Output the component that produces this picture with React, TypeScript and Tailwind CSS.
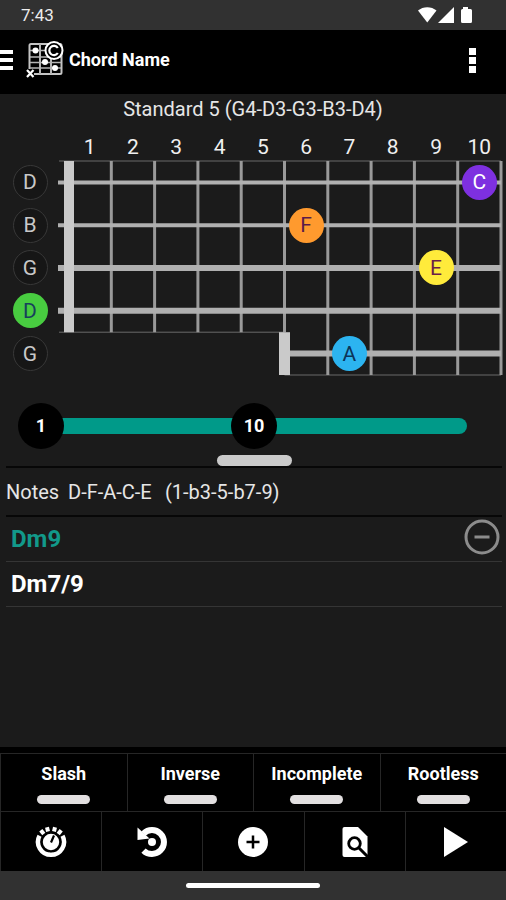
import { useState } from "react";

const strings = [
  { name: "D", thickness: 4 },
  { name: "B", thickness: 4 },
  { name: "G", thickness: 6 },
  { name: "D", thickness: 6, root: true },
  { name: "G", thickness: 6 },
];

const frets = [1, 2, 3, 4, 5, 6, 7, 8, 9, 10];

const notes = [
  { name: "C", place: "col-start-10 row-start-1", color: "bg-[#7e30e0] text-white" },
  { name: "F", place: "col-start-6 row-start-2", color: "bg-[#ff9a2e] text-[#5a1a4a]" },
  { name: "E", place: "col-start-9 row-start-3", color: "bg-[#ffeb3b] text-[#6b2048]" },
  { name: "A", place: "col-start-7 row-start-5", color: "bg-[#2cb4f0] text-[#0c3558]" },
];

const FIRST = 1;
const LAST = 19;

function StatusBar() {
  return (
    <div className="flex h-[30px] items-center justify-between bg-[#313131] pr-[34px] pl-[21px]">
      <span className="text-[17px] leading-5 text-[#ececec]">7:43</span>
      <svg width="54" height="18" viewBox="0 0 54 18" fill="#fff" aria-hidden="true">
        <path d="M0 4.5C5 0 13.500 0 18.500 4.500L9.250 16.500Z" />
        <path d="M36 1V17H20Z" />
        <path d="M45 1h5v2h2.500q1.500 0 1.500 1.500v11q0 1.500-1.500 1.500h-8q-1.500 0-1.500-1.500v-11q0-1.500 1.500-1.500H45z" />
      </svg>
    </div>
  );
}

function Header() {
  return (
    <header className="flex h-16 items-center bg-black pb-1">
      <button aria-label="Open menu" className="flex w-[13px] flex-col gap-1">
        <span className="h-1 bg-white" />
        <span className="h-1 bg-white" />
        <span className="h-1 bg-white" />
      </button>
      <svg className="ml-3" width="39" height="38" viewBox="0 0 39 38" fill="none" aria-hidden="true">
        <rect x="4.500" y="3" width="32" height="30" rx="1.500" stroke="#c4c4c4" strokeWidth="2" />
        <path d="M15 3V33M26 3V33" stroke="#b4b4b4" strokeWidth="2" />
        <path d="M5 9.500H36M5 16H36M5 21.500H36M5 27H36" stroke="#b4b4b4" strokeWidth="1.500" />
        <circle cx="10.500" cy="9.500" r="3" fill="#fff" />
        <circle cx="20" cy="21" r="3" fill="#fff" />
        <circle cx="30" cy="27" r="3" fill="#fff" />
        <circle cx="29" cy="9.500" r="8.500" fill="#000" stroke="#fff" strokeWidth="2" />
        <path d="M32.800 7A4.600 4.600 0 1 0 32.800 12" stroke="#fff" strokeWidth="2.200" />
        <path d="M1 28H9V37H1Z" fill="#000" />
        <path d="M2 29L8.500 36M8.500 29L2 36" stroke="#fff" strokeWidth="2.200" />
      </svg>
      <h1 className="ml-[5px] flex-1 text-[18px] leading-6 font-bold text-white">Chord Name</h1>
      <button aria-label="More options" className="mr-[30px] flex flex-col gap-0.5">
        <span className="size-[7px] bg-white" />
        <span className="size-[7px] bg-white" />
        <span className="size-[7px] bg-white" />
      </button>
    </header>
  );
}

function Fretboard() {
  return (
    <section aria-label="Fretboard" className="pr-[5px]">
      <div className="ml-[68px] grid grid-cols-10 text-center text-[21px] leading-7 text-[#f0f0f0]">
        {frets.map((n) => (
          <span key={n}>{n}</span>
        ))}
      </div>
      <div className="flex h-[214px]">
        <div className="grid w-[60px] grid-rows-5 place-items-center">
          {strings.map((s, i) => (
            <button
              key={i}
              className={
                s.root
                  ? "size-[35px] rounded-full bg-[#48cc40] text-[21px] leading-8 text-[#17405c]"
                  : "size-[35px] rounded-full border border-[#383838] bg-[#161616] text-[21px] leading-8 text-[#c8c8c8]"
              }
            >
              {s.name}
            </button>
          ))}
        </div>
        <div className="relative ml-2 grid flex-1 grid-cols-10 grid-rows-5 place-items-center">
          <svg className="absolute inset-0 size-full overflow-visible" aria-hidden="true">
            <line x1="-9" x2="100%" y1="0" y2="0" stroke="#6a6a6a" />
            <line x1="-9" x2="50%" y1="80%" y2="80%" stroke="#6a6a6a" />
            <line x1="50%" x2="100%" y1="100%" y2="100%" stroke="#6a6a6a" />
            {frets.map((n) => (
              <line
                key={n}
                x1={`${n * 10}%`}
                x2={`${n * 10}%`}
                y1="0"
                y2={n > 5 ? "100%" : "80%"}
                stroke="#9a9a9a"
                strokeWidth="3"
              />
            ))}
            {strings.map((s, i) => (
              <line
                key={i}
                x1={i === 4 ? "50%" : "-10"}
                x2="100%"
                y1={`${i * 20 + 10}%`}
                y2={`${i * 20 + 10}%`}
                stroke="#b0b0b0"
                strokeWidth={s.thickness}
              />
            ))}
            <line x1="1" x2="1" y1="0" y2="80%" stroke="#cacaca" strokeWidth="10" />
            <line x1="50%" x2="50%" y1="80%" y2="100%" stroke="#cacaca" strokeWidth="11" />
          </svg>
          {notes.map((n) => (
            <button
              key={n.name}
              className={`relative size-[35px] rounded-full text-[21px] leading-8 ${n.place} ${n.color}`}
            >
              {n.name}
            </button>
          ))}
        </div>
      </div>
    </section>
  );
}

const rangeClass =
  "pointer-events-none h-[46px] w-full appearance-none bg-transparent [grid-area:1/1] [&::-webkit-slider-thumb]:pointer-events-auto [&::-webkit-slider-thumb]:size-[46px] [&::-webkit-slider-thumb]:appearance-none [&::-webkit-slider-thumb]:rounded-full [&::-webkit-slider-thumb]:bg-black";

function ThumbLabel({ value }: { value: number }) {
  const share = (value - FIRST) / (LAST - FIRST);
  return (
    <span
      className="pointer-events-none z-10 w-[46px] text-center text-[18px] leading-6 font-bold text-white [grid-area:1/1]"
      style={{ marginLeft: `calc((100% - 46px) * ${share})` }}
    >
      {value}
    </span>
  );
}

function FretRange() {
  const [from, setFrom] = useState(1);
  const [to, setTo] = useState(10);
  return (
    <div className="mt-7 mr-4 ml-[18px] grid items-center">
      <div className="mx-[23px] h-4 rounded-full bg-[#009a89] [grid-area:1/1]" />
      <input
        type="range"
        aria-label="First fret"
        min={FIRST}
        max={LAST}
        value={from}
        onChange={(e) => setFrom(Math.min(Number(e.target.value), to))}
        className={rangeClass}
      />
      <input
        type="range"
        aria-label="Last fret"
        min={FIRST}
        max={LAST}
        value={to}
        onChange={(e) => setTo(Math.max(Number(e.target.value), from))}
        className={rangeClass}
      />
      <ThumbLabel value={from} />
      <ThumbLabel value={to} />
    </div>
  );
}

function Results() {
  return (
    <section className="mr-1 ml-[6px]">
      <div className="flex h-[49px] items-center border-b-2 border-[#070707] text-[20px] leading-6 whitespace-pre text-[#e6e6e6]">
        <span className="w-[62px]">Notes</span>
        <span className="w-[97px]">D-F-A-C-E</span>
        <span>(1-b3-5-b7-9)</span>
      </div>
      <ul className="text-[24px] leading-8 font-bold">
        <li className="flex h-[45px] items-center justify-between border-b border-[#353535] pl-[5px] text-[#12998a]">
          <button>Dm9</button>
          <button aria-label="Remove Dm9" className="mb-1 pr-0.5">
            <svg width="36" height="36" viewBox="0 0 36 36" fill="none" stroke="#8c8c8c" strokeWidth="3">
              <circle cx="18" cy="18" r="16" />
              <path d="M10.500 18H25.500" />
            </svg>
          </button>
        </li>
        <li className="flex h-[45px] items-center border-b border-[#353535] pl-[5px] text-white">
          <button>Dm7/9</button>
        </li>
      </ul>
    </section>
  );
}

function RotorIcon() {
  return (
    <svg width="32" height="32" viewBox="0 0 32 32" fill="none" aria-hidden="true">
      <path d="M4.500 9.800A13 13 0 1 0 27.500 9.800" stroke="#fff" strokeWidth="4.500" />
      <path
        d="M13 5.500L12 1.200M19 5.500L20 1.200M8.800 8L5.800 4.200M23.200 8L26.200 4.200"
        stroke="#fff"
        strokeWidth="4"
      />
      <circle cx="16" cy="16" r="9.200" fill="#fff" stroke="#000" strokeWidth="2" />
      <path d="M16 16.500L19 9.500" stroke="#000" strokeWidth="2.200" />
    </svg>
  );
}

function UndoIcon() {
  return (
    <svg width="32" height="32" viewBox="0 0 32 32" fill="none" aria-hidden="true">
      <path d="M7.500 7.500A12 12 0 1 1 7.500 24.500" stroke="#fff" strokeWidth="6" />
      <path d="M1.500 1.500V14L13.500 12.500Z" fill="#fff" />
      <circle cx="16" cy="16" r="4" fill="#fff" />
    </svg>
  );
}

function AddIcon() {
  return (
    <svg width="32" height="32" viewBox="0 0 32 32" fill="none" aria-hidden="true">
      <circle cx="16" cy="16" r="15" fill="#fff" />
      <path d="M16 9.500V22.500M9.500 16H22.500" stroke="#000" strokeWidth="2.500" />
    </svg>
  );
}

function FindIcon() {
  return (
    <svg width="32" height="32" viewBox="0 0 32 32" fill="none" aria-hidden="true">
      <path d="M5.500 1H19L28.500 10.500V29Q28.500 31 26.500 31H5.500Q3.500 31 3.500 29V3Q3.500 1 5.500 1Z" fill="#fff" />
      <circle cx="15.500" cy="17.500" r="5.800" stroke="#000" strokeWidth="2.800" />
      <path d="M19.500 21.500L28.500 30.500" stroke="#000" strokeWidth="3" />
    </svg>
  );
}

function PlayIcon() {
  return (
    <svg width="32" height="32" viewBox="0 0 32 32" fill="#fff" aria-hidden="true">
      <path d="M4 1L28 16L4 31Z" />
    </svg>
  );
}

const filters = ["Slash", "Inverse", "Incomplete", "Rootless"];

const actions = [
  { label: "Capo dial", Icon: RotorIcon },
  { label: "Reset", Icon: UndoIcon },
  { label: "Add", Icon: AddIcon },
  { label: "Find", Icon: FindIcon },
  { label: "Play", Icon: PlayIcon },
];

function Toolbar() {
  return (
    <footer className="mt-auto bg-black pt-[6px]">
      <div className="grid h-[58px] grid-cols-4 border-t border-[#262626]">
        {filters.map((f) => (
          <button
            key={f}
            className="flex flex-col items-center border-l border-[#262626] pt-2 text-[18px] leading-6 font-bold text-white"
          >
            {f}
            <span className="mt-[9px] h-[9px] w-[53px] rounded-full bg-[#e2dfe0]" />
          </button>
        ))}
      </div>
      <div className="grid h-[60px] grid-cols-5 border-t border-[#262626]">
        {actions.map(({ label, Icon }) => (
          <button
            key={label}
            aria-label={label}
            className="flex items-center justify-center border-l border-[#262626]"
          >
            <Icon />
          </button>
        ))}
      </div>
      <div className="flex h-[29px] items-center justify-center bg-[#313131]">
        <span className="h-[5px] w-[134px] rounded-full bg-white" />
      </div>
    </footer>
  );
}

export default function App() {
  return (
    <div className="flex min-h-screen flex-col bg-[#1b1b1b] font-[Roboto,sans-serif]">
      <StatusBar />
      <Header />
      <main>
        <h2 className="h-[39px] pt-[3px] text-center text-[20px] leading-6 text-[#e6e6e6]">
          Standard 5 (G4-D3-G3-B3-D4)
        </h2>
        <Fretboard />
        <FretRange />
        <div className="mr-1 ml-[6px] mt-[6px] flex justify-center border-b-2 border-[#070707]">
          <button aria-label="Resize panel" className="h-[11px] w-[75px] rounded-full bg-[#cacaca]" />
        </div>
        <Results />
      </main>
      <Toolbar />
    </div>
  );
}
